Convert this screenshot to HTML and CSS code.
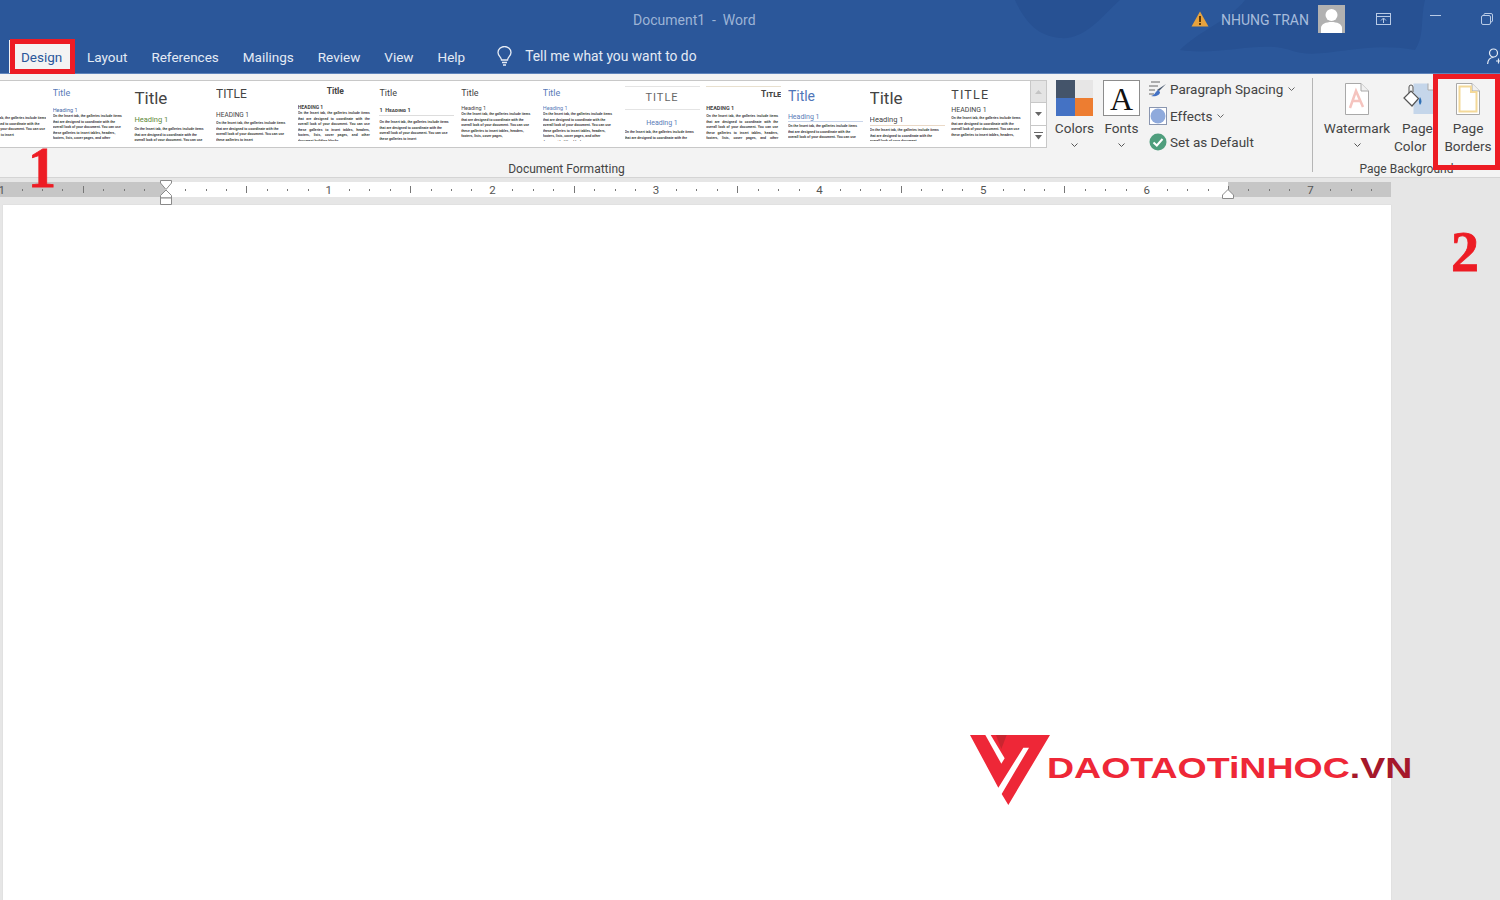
FILE: index.html
```html
<!DOCTYPE html>
<html lang="en">
<head>
<meta charset="utf-8">
<title>Document1 - Word</title>
<link rel="stylesheet" href="styles.css">
</head>
<body>
<div class="app">
  <header class="top">
    <svg class="top-bg" width="1500" height="73" viewBox="0 0 1500 73"><path d="M1015 0 C1025 22 1038 36 1060 38 C1085 40 1100 18 1120 0Z M1180 50 C1200 30 1230 20 1245 0 L1425 0 C1420 20 1425 35 1415 50 C1360 40 1320 62 1290 50 C1260 40 1220 56 1180 50Z" fill="#275193"/></svg>
    <div class="titlebar">
      <div class="doc-title">Document1&nbsp; -&nbsp; Word</div>
      <div class="account">
        <svg class="warn" width="18" height="16" viewBox="0 0 18 16"><path d="M9 0.5 L17.5 15.5 H0.5Z" fill="#e8a33d"/><rect x="8" y="5" width="2" height="6" fill="#5a3a10"/><rect x="8" y="12" width="2" height="2" fill="#5a3a10"/></svg>
        <span class="user">NHUNG TRAN</span>
        <svg class="avatar" width="27" height="28" viewBox="0 0 27 28"><rect width="27" height="28" fill="#b1b1b1"/><circle cx="13.5" cy="10" r="6" fill="#fff"/><path d="M3 28 V23 C3 19 8 17 13.5 17 C19 17 24 19 24 23 V28Z" fill="#fff"/></svg>
        <svg class="win-a" width="17" height="14" viewBox="0 0 17 14" fill="none" stroke="#b9cbe6"><rect x="1.5" y="1.5" width="14" height="11"/><path d="M1.5 4.5 H15.5 M8.5 11 V6.5 M6 8.5 L8.5 6 L11 8.5"/></svg>
        <span class="win-min"></span>
        <svg class="win-r" width="12" height="12" viewBox="0 0 12 12" fill="none" stroke="#b9cbe6"><rect x="0.5" y="2.5" width="9" height="9" rx="1.5"/><path d="M3 2.5 V1.5 Q3 .5 4 .5 H10 Q11.500 .5 11.500 2 V8 Q11.500 9 9.500 9"/></svg>
      </div>
    </div>
    <nav class="tabs">
      <a class="tab active">Design</a>
      <a class="tab">Layout</a>
      <a class="tab">References</a>
      <a class="tab">Mailings</a>
      <a class="tab">Review</a>
      <a class="tab">View</a>
      <a class="tab">Help</a>
      <svg class="bulb" width="15" height="20" viewBox="0 0 15 20" fill="none" stroke="#e6ecf5" stroke-width="1.3"><path d="M4.500 14 C4.500 11 1 10 1 6.500 A6.500 6 0 0 1 14 6.500 C14 10 10.500 11 10.500 14Z"/><path d="M5 16.500 H10 M6 19 H9"/></svg>
      <span class="tell">Tell me what you want to do</span>
      <svg class="share" width="14" height="18" viewBox="0 0 14 18" fill="none" stroke="#e6ecf5" stroke-width="1.2"><circle cx="6.500" cy="5" r="4"/><path d="M0.600 16 C1 11 4 9.500 6.500 9.500 M9 13 H14 M11.500 10.500 V15.500"/></svg>
    </nav>
  </header>

  <section class="ribbon">
    <div class="group-format">
      <div class="format-row">
        <div class="gallery-wrap">
          <div class="gallery">
            <div class="thumb cut"><p>On the Insert tab, the galleries include items that are designed to coordinate with the overall look of your document. You can use these galleries to insert</p></div>
            <div class="thumb v-blue"><div class="tt">Title</div><div class="hd">Heading 1</div><p>On the Insert tab, the galleries include items that are designed to coordinate with the overall look of your document. You can use these galleries to insert tables, headers, footers, lists, cover pages, and other document building blocks.</p></div>
            <div class="thumb v-large"><div class="tt">Title</div><div class="hd">Heading 1</div><p>On the Insert tab, the galleries include items that are designed to coordinate with the overall look of your document. You can use</p></div>
            <div class="thumb v-caps"><div class="tt">TITLE</div><div class="hd">HEADING 1</div><p>On the Insert tab, the galleries include items that are designed to coordinate with the overall look of your document. You can use these galleries to insert</p></div>
            <div class="thumb v-bold"><div class="tt">Title</div><div class="hd">HEADING 1</div><p>On the Insert tab, the galleries include items that are designed to coordinate with the overall look of your document. You can use these galleries to insert tables, headers, footers, lists, cover pages, and other document building blocks.</p></div>
            <div class="thumb v-num"><div class="tt">Title</div><div class="hd">1&nbsp; Heading 1</div><p>On the Insert tab, the galleries include items that are designed to coordinate with the overall look of your document. You can use these galleries to insert</p></div>
            <div class="thumb v-plain"><div class="tt">Title</div><div class="hd">Heading 1</div><p>On the Insert tab, the galleries include items that are designed to coordinate with the overall look of your document. You can use these galleries to insert tables, headers, footers, lists, cover pages,</p></div>
            <div class="thumb v-plain2"><div class="tt">Title</div><div class="hd">Heading 1</div><p>On the Insert tab, the galleries include items that are designed to coordinate with the overall look of your document. You can use these galleries to insert tables, headers, footers, lists, cover pages, and other document building blocks.</p></div>
            <div class="thumb v-rule"><div class="tt">TITLE</div><div class="hd">Heading 1</div><p>On the Insert tab, the galleries include items that are designed to coordinate with the</p></div>
            <div class="thumb v-right"><div class="tt">Title</div><div class="hd">Heading 1</div><p>On the Insert tab, the galleries include items that are designed to coordinate with the overall look of your document. You can use these galleries to insert tables, headers, footers, lists, cover pages, and other document building</p></div>
            <div class="thumb v-under"><div class="tt">Title</div><div class="hd">Heading 1</div><p>On the Insert tab, the galleries include items that are designed to coordinate with the overall look of your document. You can use these galleries to insert tables, headers,</p></div>
            <div class="thumb v-under2"><div class="tt">Title</div><div class="hd">Heading 1</div><p>On the Insert tab, the galleries include items that are designed to coordinate with the overall look of your document.</p></div>
            <div class="thumb v-spaced"><div class="tt">TITLE</div><div class="hd">HEADING 1</div><p>On the Insert tab, the galleries include items that are designed to coordinate with the overall look of your document. You can use these galleries to insert tables, headers,</p></div>
          </div>
          <div class="scroller">
            <span class="sc sc-up"><svg width="7" height="4" viewBox="0 0 7 4"><path d="M0 4 L3.500 0 L7 4Z" fill="#c4c4c4"/></svg></span>
            <span class="sc"><svg width="7" height="4" viewBox="0 0 7 4"><path d="M0 0 L3.500 4 L7 0Z" fill="#666"/></svg></span>
            <span class="sc"><svg width="9" height="8" viewBox="0 0 9 8"><path d="M0 .5 H9" stroke="#666"/><path d="M1 3 L4.500 7.500 L8 3Z" fill="#666"/></svg></span>
          </div>
        </div>
        <div class="big-btn colors-btn">
          <div class="swatches"><i class="s1"></i><i class="s2"></i><i class="s3"></i><i class="s4"></i></div>
          <span class="lbl">Colors</span>
          <svg class="chev" width="7" height="4" viewBox="0 0 7 4" fill="none" stroke="#555"><path d="M.5 .5 L3.500 3.500 L6.500 .5"/></svg>
        </div>
        <div class="big-btn fonts-btn">
          <div class="font-box">A</div>
          <span class="lbl">Fonts</span>
          <svg class="chev" width="7" height="4" viewBox="0 0 7 4" fill="none" stroke="#555"><path d="M.5 .5 L3.500 3.500 L6.500 .5"/></svg>
        </div>
        <div class="stack">
          <div class="stack-row">
            <svg width="18" height="16" viewBox="0 0 18 16"><path d="M2 1 H11 M0 5 H9 M0 9 H6 M0 13 H5" stroke="#666" fill="none"/><path d="M17 3 L10 10 L8 9 Z" fill="#44546a"/><path d="M9 9 C6 11 6 14 2 15 C7 16 11 14 11 11Z" fill="#4472c4"/></svg>
            <span>Paragraph Spacing</span>
            <svg class="chev-s" width="7" height="4" viewBox="0 0 7 4" fill="none" stroke="#666"><path d="M.5 .5 L3.500 3.500 L6.500 .5"/></svg>
          </div>
          <div class="stack-row">
            <svg width="18" height="18" viewBox="0 0 18 18"><rect x=".5" y=".5" width="17" height="17" fill="#fff" stroke="#8a96b0"/><circle cx="9" cy="9" r="7.500" fill="#8faadc"/></svg>
            <span>Effects</span>
            <svg class="chev-s" width="7" height="4" viewBox="0 0 7 4" fill="none" stroke="#666"><path d="M.5 .5 L3.500 3.500 L6.500 .5"/></svg>
          </div>
          <div class="stack-row">
            <svg width="18" height="18" viewBox="0 0 18 18"><circle cx="9" cy="9" r="8.500" fill="#4f9e7d"/><path d="M4.500 9.500 L7.800 12.500 L13.500 6" fill="none" stroke="#fff" stroke-width="2"/></svg>
            <span>Set as Default</span>
          </div>
        </div>
      </div>
      <div class="group-label format-label">Document Formatting</div>
    </div>
    <div class="divider"></div>
    <div class="group-bg">
      <div class="bg-row">
        <div class="doc-btn wm-btn">
          <svg width="24" height="32" viewBox="0 0 24 32"><path d="M.5 .5 H16 L23.500 8 V31.500 H.5Z" fill="#fff" stroke="#a9a9a9"/><path d="M16 .5 V8 H23.500" fill="#f1f1f1" stroke="#a9a9a9"/><path d="M5 25 L11 8 L18 24 M8 18 H15" fill="none" stroke="#f5c4bf" stroke-width="2.500"/></svg>
          <span class="lbl">Watermark</span>
          <svg class="chev" width="7" height="4" viewBox="0 0 7 4" fill="none" stroke="#555"><path d="M.5 .5 L3.500 3.500 L6.500 .5"/></svg>
        </div>
        <div class="doc-btn pc-btn">
          <svg class="pc-icon" width="32" height="32" viewBox="0 0 32 32"><path d="M10.500 .5 H25 L31.500 7 V31 H10.500Z" fill="#c5d6ea"/><path d="M25 .5 V7 H31.500" fill="#f4f4f4" stroke="#a9a9a9"/><path d="M1 15 L8 8 L15.500 15.500 L9 23Z" fill="#fff" stroke="#555" stroke-width="1.200"/><path d="M6 10 V4 A2 2 0 0 1 10 4 V9" fill="none" stroke="#555"/><path d="M17 14 C19 17 19 20 17 22 C15.500 20 15.500 17 17 14Z" fill="#2f6fb5"/></svg>
          <span class="lbl pc-l1">Page</span>
          <span class="lbl pc-l2">Color</span>
        </div>
        <div class="doc-btn pb-btn">
          <svg width="24" height="32" viewBox="0 0 24 32"><path d="M.5 .5 H16 L23.500 8 V31.500 H.5Z" fill="#fff" stroke="#a9a9a9"/><path d="M16 .5 V8 H23.500" fill="#f1f1f1" stroke="#a9a9a9"/><path d="M3.500 3.500 H15 V9 H20.500 V28.500 H3.500Z" fill="none" stroke="#f4d999" stroke-width="2"/></svg>
          <span class="lbl">Page</span>
          <span class="lbl">Borders</span>
        </div>
      </div>
      <div class="group-label bg-label">Page Background</div>
    </div>
  </section>

  <section class="ruler-bar">
    <div class="ruler">
      <div class="inch"><span class="n">1</span><i></i><i></i><i></i><b></b><i></i><i></i><i></i></div>
      <div class="inch"><span class="n"></span><i></i><i></i><i></i><b></b><i></i><i></i><i></i></div>
      <div class="inch"><span class="n">1</span><i></i><i></i><i></i><b></b><i></i><i></i><i></i></div>
      <div class="inch"><span class="n">2</span><i></i><i></i><i></i><b></b><i></i><i></i><i></i></div>
      <div class="inch"><span class="n">3</span><i></i><i></i><i></i><b></b><i></i><i></i><i></i></div>
      <div class="inch"><span class="n">4</span><i></i><i></i><i></i><b></b><i></i><i></i><i></i></div>
      <div class="inch"><span class="n">5</span><i></i><i></i><i></i><b></b><i></i><i></i><i></i></div>
      <div class="inch"><span class="n">6</span><i></i><i></i><i></i><b></b><i></i><i></i><i></i></div>
      <div class="inch"><span class="n">7</span><i></i><i></i><i></i></div>
    </div>
  </section>

  <main class="canvas">
    <div class="page"></div>
  </main>

  <svg class="indent-left" width="12" height="25" viewBox="0 0 12 25" fill="#fff" stroke="#8a8a8a"><path d="M.5 .5 H11.500 V3 L6 9.500 L.5 3Z"/><path d="M6 10 L11.500 15.500 V18 H.5 V15.500Z"/><path d="M.5 18 H11.500 V24.500 H.5Z"/></svg>
  <svg class="indent-right" width="12" height="10" viewBox="0 0 12 10" fill="#fff" stroke="#8a8a8a"><path d="M6 .5 L11.500 6 V9.500 H.5 V6Z"/></svg>

  <div class="mark mark-design"></div>
  <div class="mark mark-borders"></div>
  <div class="step step-1">1</div>
  <div class="step step-2">2</div>

  <div class="logo">
    <svg width="110" height="90" viewBox="0 0 330 270"><path d="M30 30 H270 L145 240 L125 207 L207 68 H190 L115 188Z" fill="#ee2737"/><path d="M76 30 H92 L134 100 L124 116Z" fill="#fff"/><path d="M108 30 H140 L124 72Z" fill="#c9252f"/></svg>
    <span class="logo-text">DAOTAOTiNHOC<em>.VN</em></span>
  </div>
</div>
</body>
</html>
```
FILE: styles.css
```css
* { box-sizing: border-box; }
html, body { margin: 0; padding: 0; height: 900px; overflow: hidden; }
body { font-family: Roboto, "Open Sans", sans-serif; color: #444; background: #e6e6e6; }
.app { position: relative; width: 1500px; height: 900px; display: flex; flex-direction: column; overflow: hidden; }

/* Blue header */
.top { position: relative; height: 74px; flex: none; background: #2b579a; border-bottom: 1px solid #5f84bb; }
.top-bg { position: absolute; left: 0; top: 0; }
.titlebar { position: relative; height: 40px; display: flex; align-items: center; padding-left: 633px; }
.doc-title { color: #9db4d6; font-size: 14px; }
.account { margin-left: auto; display: flex; align-items: center; height: 40px; padding-bottom: 3px; }
.warn { margin-right: 12px; }
.user { color: #a6bcdc; font-size: 14px; width: 97px; margin-top: 2px; }
.avatar { margin-right: 30px; }
.win-a { margin-right: 38px; }
.win-min { width: 11px; height: 1px; background: #b9cbe6; margin-right: 40px; margin-bottom: 6px; }
.win-r { margin-right: 7px; }
.tabs { position: relative; height: 33px; display: flex; align-items: center; padding-left: 9px; padding-bottom: 1px; }
.tab { color: #e4ebf5; font-size: 13.500px; padding: 0 12px; height: 33px; line-height: 34px; }
.tab.active { color: #2b579a; background: #f3f3f3; margin-right: 2px; width: 64px; }
.bulb { margin-left: 20px; margin-right: 13px; }
.tell { color: #e4ebf5; font-size: 13.800px; }
.share { margin-left: auto; margin-right: -1px; margin-top: 2px; }

/* Ribbon */
.ribbon { height: 104px; flex: none; display: flex; background: #f3f3f3; border-bottom: 1px solid #d4d4d4; }
.group-format { width: 1312px; display: flex; flex-direction: column; }
.format-row { height: 87px; display: flex; padding-top: 6px; }
.gallery-wrap { width: 1047px; height: 68px; flex: none; display: flex; background: #fff; border: 1px solid #c8c8c8; border-left: 0; }
.gallery { width: 1030px; flex: none; display: flex; gap: 6.700px; overflow: hidden; }
.thumb { width: 75px; height: 60px; flex: none; overflow: hidden; color: #222; }
.thumb p { margin: 0; width: 72px; font-family: "Liberation Sans", sans-serif; font-size: 3.300px; line-height: 5.600px; font-weight: 700; color: #2a2a2a; }
.tt { color: #444; white-space: nowrap; }
.hd { color: #444; white-space: nowrap; }
.thumb.cut { margin-left: -23px; width: 69px; padding-top: 35px; }
.v-blue { padding-top: 6px; }
.v-blue .tt { color: #5a7cb8; font-size: 9px; line-height: 12px; }
.v-blue .hd { color: #4a6aa8; font-size: 5.500px; line-height: 7px; margin-top: 8px; }
.v-large { padding-top: 6px; }
.v-large .tt { font-size: 17px; line-height: 22px; }
.v-large .hd { color: #5f8a3a; font-size: 7.500px; line-height: 10px; margin-top: 6px; }
.v-large p { margin-top: 2px; }
.v-caps { padding-top: 6px; }
.v-caps .tt { font-size: 12px; line-height: 15px; }
.v-caps .hd { font-size: 6.500px; line-height: 8px; margin-top: 9px; }
.v-caps p { margin-top: 2px; }
.v-bold { padding-top: 5px; }
.v-bold .tt { font-size: 8.500px; font-weight: 700; text-align: center; line-height: 11px; }
.v-bold .hd { font-size: 5px; font-weight: 700; line-height: 7px; margin-top: 7px; }
.v-bold p, .v-right p { text-align: justify; }
.v-num { padding-top: 6px; }
.v-num .tt { font-size: 9px; line-height: 12px; }
.v-num .hd { font-size: 5.500px; font-weight: 700; line-height: 7px; margin-top: 8px; padding-bottom: 1px; border-bottom: 1px solid #ddd; font-variant: small-caps; }
.v-num p { margin-top: 4px; }
.v-plain, .v-plain2 { padding-top: 6px; }
.v-plain .tt { font-size: 9px; line-height: 12px; }
.v-plain .hd { font-size: 5.500px; line-height: 7px; margin-top: 6px; }
.v-plain2 .tt { color: #5a7cb8; font-size: 9px; line-height: 12px; }
.v-plain2 .hd { color: #5a7cb8; font-size: 5.500px; line-height: 7px; margin-top: 6px; }
.v-rule { padding-top: 5px; }
.v-rule .tt { color: #666; font-size: 11px; letter-spacing: 1px; text-align: center; line-height: 22px; border-top: 1px solid #e4e4e4; border-bottom: 1px solid #e4e4e4; height: 24px; }
.v-rule .hd { color: #5a7cb8; font-size: 7px; text-align: center; line-height: 10px; margin-top: 8px; }
.v-rule p { margin-top: 2px; }
.v-right { padding-top: 5px; }
.v-right .tt { font-size: 8.500px; font-weight: 700; text-align: right; line-height: 14px; border-top: 1px solid #e8e0cf; font-variant: small-caps; }
.v-right .hd { font-size: 5.500px; font-weight: 700; line-height: 7px; margin-top: 4px; text-transform: uppercase; }
.v-right p { margin-top: 2px; }
.v-under { padding-top: 6px; }
.v-under .tt { color: #4f75b8; font-size: 14px; line-height: 18px; }
.v-under .hd { color: #5a7cb8; font-size: 7px; line-height: 8px; margin-top: 8px; border-bottom: 1px solid #c9d5ea; }
.v-under p { margin-top: 2px; }
.v-under2 { padding-top: 6px; }
.v-under2 .tt { font-size: 17px; line-height: 22px; }
.v-under2 .hd { font-size: 7.500px; line-height: 10px; margin-top: 6px; border-bottom: 1px solid #ead9c7; }
.v-under2 p { margin-top: 2px; }
.v-spaced { padding-top: 6px; }
.v-spaced .tt { font-size: 12.500px; letter-spacing: 1.200px; line-height: 16px; }
.v-spaced .hd { font-size: 7px; line-height: 8px; margin-top: 3px; }
.v-spaced p { margin-top: 2px; }
.scroller { width: 16px; flex: none; display: flex; flex-direction: column; border-left: 1px solid #c8c8c8; }
.sc { flex: 1; display: flex; align-items: center; justify-content: center; border-bottom: 1px solid #c8c8c8; }
.sc:last-child { border-bottom: 0; }
.sc-up { background: #e4e4e4; }
.big-btn { flex: none; display: flex; flex-direction: column; align-items: center; }
.colors-btn { width: 37px; margin-left: 9px; }
.fonts-btn { width: 37px; margin-left: 10px; }
.lbl { font-size: 13.600px; line-height: 18px; color: #444; white-space: nowrap; }
.big-btn .lbl { margin-top: 3px; }
.chev { margin-top: 6px; }
.swatches { width: 37px; height: 36px; display: grid; grid-template-columns: 1fr 1fr; grid-template-rows: 1fr 1fr; }
.s1 { background: #44546a; } .s2 { background: #e7e6e6; } .s3 { background: #4472c4; } .s4 { background: #ed7d31; }
.font-box { width: 37px; height: 36px; background: #fff; border: 1px solid #8d8d8d; font-family: "Liberation Serif", serif; font-size: 32px; line-height: 36px; text-align: center; color: #111; }
.stack { margin-left: 9px; display: flex; flex-direction: column; gap: 8.500px; }
.stack-row { height: 18px; display: flex; align-items: center; font-size: 13.500px; color: #444; white-space: nowrap; }
.stack-row span { margin-left: 3px; }
.chev-s { margin-left: 5px; }
.group-label { font-size: 12px; line-height: 16px; color: #444; text-align: center; }
.format-label { width: 1133px; }
.divider { width: 1px; height: 94px; margin-top: 4px; background: #b5b5b5; flex: none; }
.group-bg { flex: 1; display: flex; flex-direction: column; position: relative; }
.bg-row { height: 87px; display: flex; padding-top: 9px; }
.doc-btn { flex: none; display: flex; flex-direction: column; align-items: center; }
.doc-btn .lbl:first-of-type { margin-top: 4px; }
.doc-btn svg:first-child { flex: none; }
.wm-btn { width: 66px; margin-left: 11px; }
.pc-btn { width: 46px; margin-left: 0; align-items: flex-start; }
.pc-icon { margin-left: 13px; }
.pc-l1 { margin-left: 12px; }
.pc-l2 { margin-left: 4px; }
.pb-btn { width: 48px; margin-left: 8px; }
.bg-label { width: 187px; }

/* Ruler */
.ruler-bar { height: 27px; flex: none; padding-top: 4px; background: #e6e6e6; overflow: hidden; }
.ruler { width: 1391px; height: 15px; display: flex; overflow: hidden; background: linear-gradient(to right, #c6c6c6 165px, #fff 165px, #fff 1228px, #c6c6c6 1228px); }
.inch { flex: 0 0 163.600px; display: flex; align-items: center; }
.inch:first-child { margin-left: -8.600px; }
.inch > * { flex: 0 0 20.450px; display: flex; align-items: center; justify-content: center; font-style: normal; }
.n { font-size: 11.500px; color: #555; }
.inch i::after { content: ""; width: 1px; height: 2px; background: #777; }
.inch b::after { content: ""; width: 1px; height: 7px; background: #777; }

/* Canvas */
.canvas { flex: 1; background: #e6e6e6; min-height: 0; }
.page { margin-left: 3px; width: 1388px; height: 100%; background: #fff; box-shadow: 0 0 1px #c8c8c8; }

/* Overlays */
.indent-left { position: absolute; left: 160px; top: 180px; }
.indent-right { position: absolute; left: 1222px; top: 189px; }
.mark { position: absolute; border: 5px solid #ed1c24; }
.mark-design { left: 10px; top: 39px; width: 65px; height: 35px; }
.mark-borders { left: 1433px; top: 74px; width: 67px; height: 96px; }
.step { position: absolute; font-family: "Liberation Serif", serif; font-weight: 700; font-size: 56px; line-height: 56px; color: #ed1c24; -webkit-text-stroke: 0.8px #ed1c24; }
.step-1 { left: 28px; top: 140px; }
.step-2 { left: 1451px; top: 224px; }
.logo { position: absolute; left: 960px; top: 725px; display: flex; }
.logo-text { font-family: "Liberation Sans", sans-serif; font-weight: 700; font-size: 30px; line-height: 30px; color: #ee2737; margin-left: -23px; margin-top: 28px; white-space: nowrap; transform: scaleX(1.25); transform-origin: left center; }
.logo-text em { font-style: normal; color: #a5182b; }
```
